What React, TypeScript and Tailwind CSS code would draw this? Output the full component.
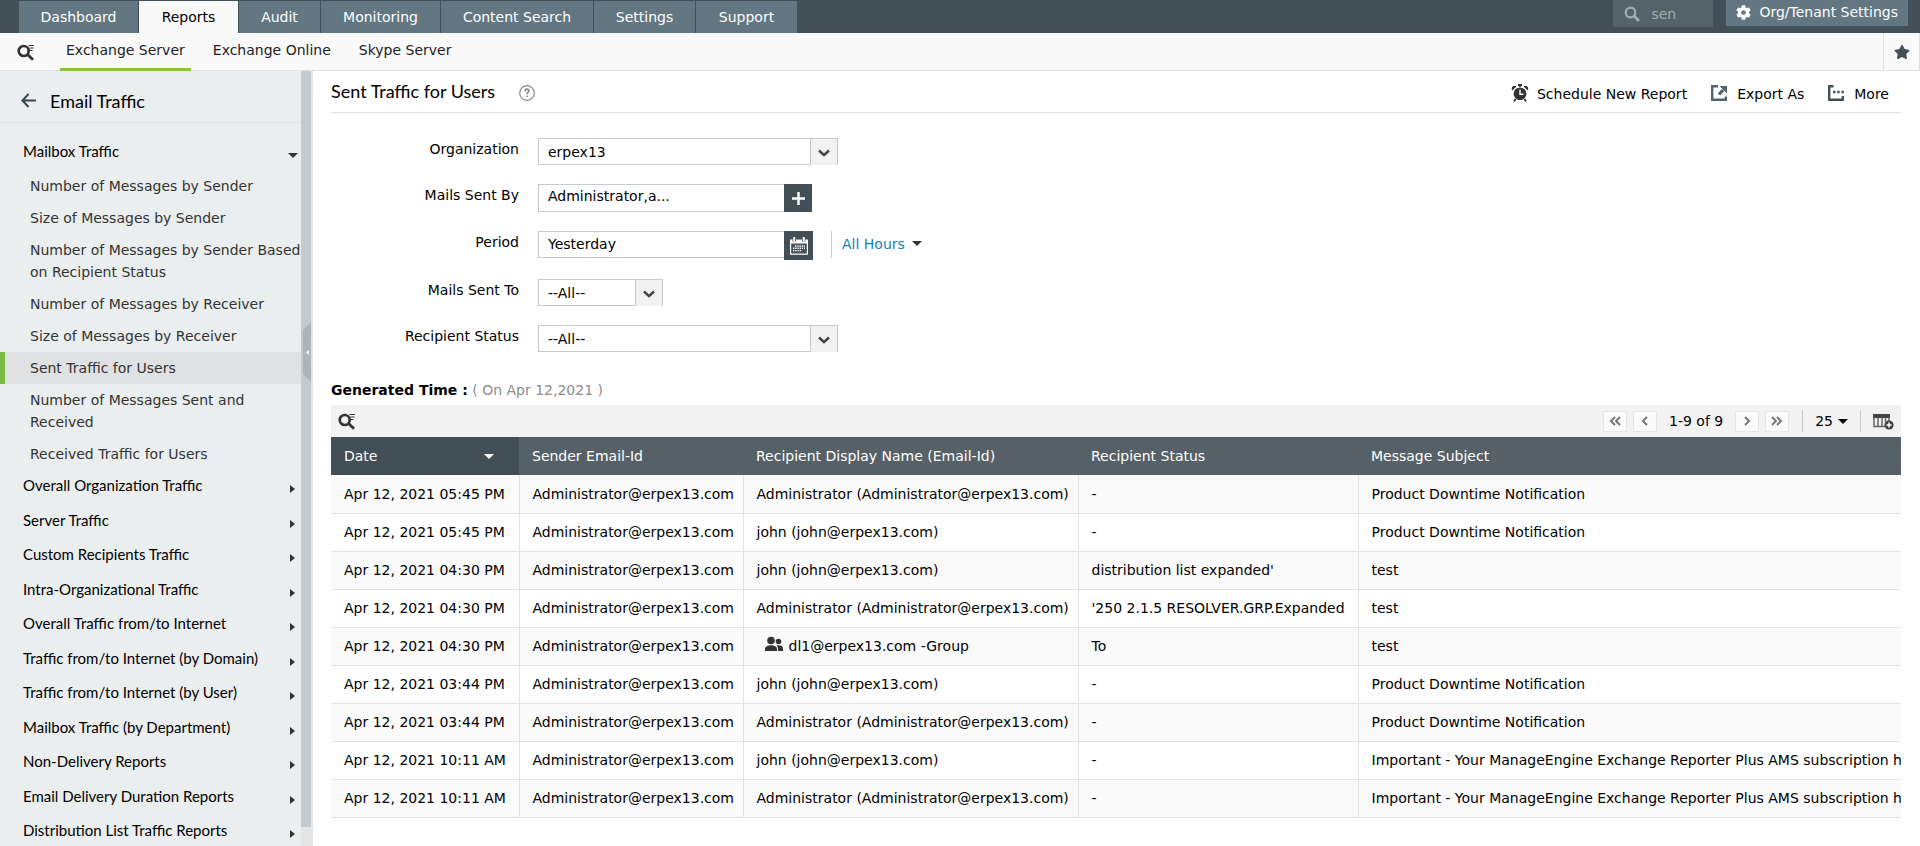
import React, { useState } from "react";
import { FaStar, FaCog } from "react-icons/fa";

interface ReportRow {
  date: string;
  recipient: string;
  group?: boolean;
  status: string;
  subject: string;
}

const SENDER = "Administrator@erpex13.com";
const ADMIN = "Administrator (Administrator@erpex13.com)";
const JOHN = "john (john@erpex13.com)";
const EXPIRY =
  "Important - Your ManageEngine Exchange Reporter Plus AMS subscription has";

const tabs = [
  { name: "Dashboard", width: "w-[119px]" },
  { name: "Reports", width: "w-[99px]" },
  { name: "Audit", width: "w-[81px]" },
  { name: "Monitoring", width: "w-[119px]" },
  { name: "Content Search", width: "w-[152px]" },
  { name: "Settings", width: "w-[101px]" },
  { name: "Support", width: "w-[101px]" },
];

const subTabs = ["Exchange Server", "Exchange Online", "Skype Server"];

const mailboxReports = [
  "Number of Messages by Sender",
  "Size of Messages by Sender",
  "Number of Messages by Sender Based on Recipient Status",
  "Number of Messages by Receiver",
  "Size of Messages by Receiver",
  "Sent Traffic for Users",
  "Number of Messages Sent and Received",
  "Received Traffic for Users",
];

const categories = [
  "Overall Organization Traffic",
  "Server Traffic",
  "Custom Recipients Traffic",
  "Intra-Organizational Traffic",
  "Overall Traffic from/to Internet",
  "Traffic from/to Internet (by Domain)",
  "Traffic from/to Internet (by User)",
  "Mailbox Traffic (by Department)",
  "Non-Delivery Reports",
  "Email Delivery Duration Reports",
  "Distribution List Traffic Reports",
];

const rows: ReportRow[] = [
  { date: "Apr 12, 2021 05:45 PM", recipient: ADMIN, status: "-", subject: "Product Downtime Notification" },
  { date: "Apr 12, 2021 05:45 PM", recipient: JOHN, status: "-", subject: "Product Downtime Notification" },
  { date: "Apr 12, 2021 04:30 PM", recipient: JOHN, status: "distribution list expanded'", subject: "test" },
  { date: "Apr 12, 2021 04:30 PM", recipient: ADMIN, status: "'250 2.1.5 RESOLVER.GRP.Expanded", subject: "test" },
  { date: "Apr 12, 2021 04:30 PM", recipient: "dl1@erpex13.com -Group", group: true, status: "To", subject: "test" },
  { date: "Apr 12, 2021 03:44 PM", recipient: JOHN, status: "-", subject: "Product Downtime Notification" },
  { date: "Apr 12, 2021 03:44 PM", recipient: ADMIN, status: "-", subject: "Product Downtime Notification" },
  { date: "Apr 12, 2021 10:11 AM", recipient: JOHN, status: "-", subject: EXPIRY },
  { date: "Apr 12, 2021 10:11 AM", recipient: ADMIN, status: "-", subject: EXPIRY },
];

const FilterIcon = () => (
  <svg className="w-[18px] h-[17px]" viewBox="0 0 18 17" fill="none" stroke="#333">
    <circle cx="6.7" cy="7" r="5" strokeWidth="2.6" />
    <path d="M10.5 10.5L16 15.8" strokeWidth="2.8" />
    <path d="M11.5 1.5h5.5M12.5 4h4M13 6.5h2.5" strokeWidth="1.1" />
  </svg>
);

const ChevronIcon = () => (
  <svg className="w-3 h-2" viewBox="0 0 12 8" fill="none" stroke="#444" strokeWidth="2.6">
    <path d="M1 1.5l5 4.6 5-4.6" />
  </svg>
);

const CaretDown = ({ color = "#333" }: { color?: string }) => (
  <svg className="w-2.5 h-[5px] shrink-0" viewBox="0 0 10 5" fill={color}>
    <path d="M0 0h10L5 5z" />
  </svg>
);

const Pager = ({ label, d }: { label: string; d: string }) => (
  <button
    aria-label={label}
    className="w-6 h-[21px] flex items-center justify-center border border-[#e6e6e6] bg-[#fafafa]"
  >
    <svg className="w-3 h-2.5" viewBox="0 0 12 10" fill="none" stroke="#777" strokeWidth="2">
      <path d={d} />
    </svg>
  </button>
);

interface SelectFieldProps {
  id: string;
  value: string;
  width: string;
}

const SelectField: React.FC<SelectFieldProps> = ({ id, value, width }) => (
  <div className={`relative h-[27px] ${width}`}>
    <select
      id={id}
      className="w-full h-full appearance-none border border-[#c4cbcf] bg-white pl-[9px] outline-none"
    >
      <option>{value}</option>
    </select>
    <span className="absolute right-px top-px bottom-0 w-[27px] flex items-center justify-center
      pointer-events-none border-l border-[#c4cbcf] bg-[#f2f2f2] pt-0.5">
      <ChevronIcon />
    </span>
  </div>
);

interface FieldProps {
  id: string;
  label: string;
  children: React.ReactNode;
}

const Field: React.FC<FieldProps> = ({ id, label, children }) => (
  <div className="flex items-start">
    <label htmlFor={id} className="w-[188px] mr-[19px] text-right leading-[22px]">
      {label}
    </label>
    {children}
  </div>
);

const App: React.FC = () => {
  const [selected, setSelected] = useState("Sent Traffic for Users");

  return (
    <div className="h-screen flex flex-col overflow-hidden bg-white text-black text-sm
      font-['DejaVu_Sans',sans-serif]">

      {/* Top bar */}
      <header className="h-[33px] shrink-0 flex items-start bg-[#434f57] pl-[19px] pr-3">
        <nav className="flex gap-px pt-px">
          {tabs.map((tab) => (
            <a
              key={tab.name}
              href="#"
              className={`h-8 flex items-center justify-center ${tab.width} ${tab.name === "Reports"
                ? "bg-[#f9f9f9] text-black"
                : "bg-[#637783] text-white"
                }`}
            >
              {tab.name}
            </a>
          ))}
        </nav>
        <label className="ml-auto w-[100px] h-[27px] flex items-center bg-[#56626a] pl-[11px]">
          <svg className="w-4 h-4 mr-[11px] shrink-0" viewBox="0 0 16 16" fill="none" stroke="#a4abaf">
            <circle cx="6.5" cy="6.5" r="4.8" strokeWidth="2.2" />
            <path d="M10 10l5 5" strokeWidth="2.6" />
          </svg>
          <input
            aria-label="Search"
            defaultValue="sen"
            className="w-full min-w-0 bg-transparent text-[#a4abaf] outline-none"
          />
        </label>
        <button className="ml-[13px] h-[26px] px-2.5 pb-0.5 flex items-center gap-2 bg-[#637783] text-white whitespace-nowrap">
          <FaCog className="w-[15px] h-[15px]" />
          Org/Tenant Settings
        </button>
      </header>

      {/* Sub navigation */}
      <nav className="h-[38px] shrink-0 flex bg-[#f9f9f9] border-b border-[#e2e2e2] text-[#222]">
        <button aria-label="Filter" className="w-[60px] pl-[17px] pt-0.5 flex items-center">
          <FilterIcon />
        </button>
        <div className="flex gap-4">
          {subTabs.map((name, i) => (
            <a
              key={name}
              href="#"
              className={`h-[38px] px-1.5 pt-1.5 leading-[22px] border-b-[3px] ${i === 0
                ? "border-[#8bc53f]"
                : "border-transparent"
                }`}
            >
              {name}
            </a>
          ))}
        </div>
        <button aria-label="Favorites" className="ml-auto w-[37px] flex items-center justify-center
          border-x border-[#e2e2e2] text-[#434f57]">
          <FaStar className="w-4 h-4" />
        </button>
      </nav>

      <div className="flex-1 min-h-0 flex">

        {/* Sidebar */}
        <aside className="w-[301px] shrink-0 overflow-hidden bg-[#eaeeef]">
          <div className="h-[52px] flex items-center gap-3.5 pl-[21px] pt-2 border-b border-[#dfe3e5]
            font-[Lato,sans-serif] text-lg">
            <svg className="w-[15px] h-[15px]" viewBox="0 0 15 15" fill="none" stroke="#37474f" strokeWidth="2">
              <path d="M15 7.5H1.5M7.5 1l-6 6.5 6 6.5" />
            </svg>
            Email Traffic
          </div>
          <button className="w-full h-[47px] flex items-center justify-between pl-[23px] pr-[3px] pt-2.5
            font-[Lato,sans-serif] text-[15px]">
            Mailbox Traffic
            <span className="pt-2"><CaretDown /></span>
          </button>
          <ul className="text-[#333]">
            {mailboxReports.map((name) => (
              <li key={name}>
                <a
                  href="#"
                  onClick={() => setSelected(name)}
                  className={`block py-[5px] pl-[25px] border-l-[5px] leading-[22px] ${selected === name
                    ? "bg-[#dfe1e2] border-[#7dbb4a]"
                    : "border-transparent"
                    }`}
                >
                  {name}
                </a>
              </li>
            ))}
          </ul>
          <ul className="font-[Lato,sans-serif] text-[15px]">
            {categories.map((name) => (
              <li key={name} className="odd:h-[34px] even:h-[35px]">
                <button className="w-full h-full flex items-center justify-between pl-[23px] pr-1.5 pb-0.5">
                  {name}
                  <svg className="w-[5px] h-2 mt-1.5" viewBox="0 0 5 8" fill="#333">
                    <path d="M0 0l5 4-5 4z" />
                  </svg>
                </button>
              </li>
            ))}
          </ul>
        </aside>

        {/* Collapse strip */}
        <div className="w-[12px] shrink-0 flex flex-col bg-[#e3e5e7] border-r border-[#e3e5e7]">
          <button aria-label="Collapse sidebar" className="w-2.5 flex-1 mb-[19px] bg-[#c4cbcf] flex justify-end pt-[251px]">
            <svg className="w-2 h-[60px]" viewBox="0 0 8 60">
              <path d="M8 0L0 8v44l8 8z" fill="#aeb5b9" />
              <path d="M6 28v5l-3-2.5z" fill="#fff" />
            </svg>
          </button>
        </div>

        <main className="flex-1 min-w-0 pl-[18px] pr-[19px]">

          {/* Report title */}
          <div className="h-[42px] flex items-center border-b border-[#dedede]">
            <h1 className="font-[Lato,sans-serif] text-lg pb-0.5">Sent Traffic for Users</h1>
            <button aria-label="Help" className="ml-6 pt-0.5">
              <svg className="w-4 h-4" viewBox="0 0 16 16" fill="none" stroke="#888">
                <circle cx="8" cy="8" r="7.3" strokeWidth="1.2" />
                <path d="M6 6.2c0-2.8 4-2.6 4-.2 0 1.5-2 1.5-2 3.2M8 10.5v1.6" strokeWidth="1.6" />
              </svg>
            </button>
            <div className="ml-auto flex items-center gap-6 pr-3 pt-1">
              <button className="flex items-center gap-2">
                <svg className="w-[18px] h-[18px] mb-0.5" viewBox="0 0 18 18">
                  <path d="M4.5 15L3 17.5M13.5 15l1.5 2.5M9 3V1M7 1h4" stroke="#333" strokeWidth="1.8" />
                  <path d="M1.200 6.500C-.5 3 3 .5 5.500 2.500zM16.800 6.500C18.500 3 15 .5 12.500 2.500z" fill="#333" />
                  <circle cx="9" cy="9.800" r="6.400" fill="#333" />
                  <path d="M9 5.500v4.800h3.500" stroke="#fff" strokeWidth="1.400" fill="none" />
                </svg>
                Schedule New Report
              </button>
              <button className="flex items-center gap-2.5">
                <svg className="w-4 h-4 mb-0.5" viewBox="0 0 16 16" fill="none" stroke="#55626a">
                  <path d="M7 1.200H1.200v13.600h13.600V11.500" strokeWidth="2.400" />
                  <path d="M8 9.500l4-4.500" strokeWidth="3.200" />
                  <path d="M8.500 1H16v7.500z" fill="#55626a" stroke="none" />
                </svg>
                Export As
              </button>
              <button className="flex items-center gap-2.5">
                <svg className="w-4 h-4 mb-0.5" viewBox="0 0 16 16" fill="none" stroke="#434f57">
                  <path d="M5.500 1.200H1.200v13.600h13.600V11" strokeWidth="2.400" />
                  <path d="M5 7h11" strokeWidth="2.400" strokeDasharray="2.400 1.800" />
                </svg>
                More
              </button>
            </div>
          </div>

          {/* Filters */}
          <form className="pt-[25px] flex flex-col gap-[19px]">
            <Field id="organization" label="Organization">
              <SelectField id="organization" value="erpex13" width="w-[300px]" />
            </Field>
            <Field id="sent-by" label="Mails Sent By">
              <input
                id="sent-by"
                defaultValue="Administrator,a..."
                className="w-[246px] h-7 border border-r-0 border-[#c4cbcf] pl-[9px] pb-1 outline-none"
              />
              <button type="button" aria-label="Add senders" className="size-7 flex items-center justify-center bg-[#434f57]">
                <svg className="w-[13px] h-[13px]" viewBox="0 0 13 13" stroke="#fff" strokeWidth="2.4">
                  <path d="M6.5 0v13M0 6.5h13" />
                </svg>
              </button>
            </Field>
            <Field id="period" label="Period">
              <input
                id="period"
                defaultValue="Yesterday"
                className="w-[246px] h-[27px] border border-r-0 border-[#c4cbcf] pl-[9px] pb-0.5 outline-none"
              />
              <button type="button" aria-label="Pick a period" className="size-[29px] flex items-center justify-center bg-[#434f57]">
                <svg className="w-[18px] h-[18px]" viewBox="0 0 18 18" fill="none" stroke="#fff">
                  <path d="M.6 4v13.2h16.8V4" strokeWidth="1.2" />
                  <path d="M0 3.500h2.500M6 3.500h6M15.500 3.500H18M0 5.500h18" strokeWidth="1.800" />
                  <path d="M4.200 0v4.500M13.800 0v4.500" strokeWidth="2" />
                  <path d="M5 9h10M3 11.300h12M3 13.600h9" strokeWidth="1.400" strokeDasharray="1.400 .8" />
                </svg>
              </button>
              <button type="button" className="ml-[18px] h-[27px] border-l border-[#c4cbcf] pl-2.5 pb-0.5
                flex items-center gap-[7px] text-[#1482b4]">
                All Hours
                <CaretDown />
              </button>
            </Field>
            <Field id="sent-to" label="Mails Sent To">
              <SelectField id="sent-to" value="--All--" width="w-[125px]" />
            </Field>
            <Field id="status" label="Recipient Status">
              <SelectField id="status" value="--All--" width="w-[300px]" />
            </Field>
          </form>

          <p className="pt-[25px] pb-0.5 leading-[26px] text-[#8c8c8c]">
            <b className="text-black">Generated Time :</b> ( On Apr 12,2021 )
          </p>

          {/* Table toolbar */}
          <div className="h-8 flex items-center bg-[#f2f2f2] px-[7px]">
            <button aria-label="Filter rows"><FilterIcon /></button>
            <div className="ml-auto flex items-center">
              <div className="flex gap-1.5">
                <Pager label="First page" d="M6 1L2 5l4 4M11 1L7 5l4 4" />
                <Pager label="Previous page" d="M8 1L4 5l4 4" />
              </div>
              <span className="px-3">1-9 of 9</span>
              <div className="flex gap-1.5">
                <Pager label="Next page" d="M4 1l4 4-4 4" />
                <Pager label="Last page" d="M1 1l4 4-4 4M6 1l4 4-4 4" />
              </div>
              <button className="ml-[13px] h-[22px] px-3 flex items-center gap-[5px] border-x border-[#c4cbcf]">
                25
                <CaretDown color="#000" />
              </button>
              <button aria-label="Add or remove columns" className="ml-3">
                <svg className="w-[21px] h-[17px]" viewBox="0 0 21 17">
                  <path d="M0 1h17v4H0z" fill="#444" />
                  <path d="M1 5v8.5h11M5 5v8.5M9 5v8.5M12.5 5v4M16 5v3" stroke="#666" strokeWidth="1.5" fill="none" />
                  <circle cx="16" cy="12" r="4.6" fill="#444" />
                  <path d="M16 9.5v5M13.5 12h5" stroke="#fff" strokeWidth="1.5" />
                </svg>
              </button>
            </div>
          </div>

          {/* Report data */}
          <table className="w-full table-fixed border-collapse text-left whitespace-nowrap">
            <thead className="bg-[#566167] text-white">
              <tr className="h-[38px]">
                <th className="w-[188px] px-[13px] font-normal bg-[#434f57]">
                  <button className="w-full flex items-center justify-between pr-3">
                    Date
                    <CaretDown color="#fff" />
                  </button>
                </th>
                <th className="w-[224px] pl-[13px] font-normal">Sender Email-Id</th>
                <th className="w-[335px] pl-[13px] font-normal">Recipient Display Name (Email-Id)</th>
                <th className="w-[280px] pl-[13px] font-normal">Recipient Status</th>
                <th className="pl-[13px] font-normal">Message Subject</th>
              </tr>
            </thead>
            <tbody>
              {rows.map((row, i) => (
                <tr key={i} className="h-[38px] border-b border-[#e2e2e2] odd:bg-[#fafafa]">
                  <td className="pl-[13px] border-r border-[#e2e2e2]">{row.date}</td>
                  <td className="pl-[13px] border-r border-[#e2e2e2]">{SENDER}</td>
                  <td className="pl-[13px] border-r border-[#e2e2e2]">
                    {row.group ? (
                      <span className="flex items-center gap-1.5 pl-2">
                        <svg className="w-[18px] h-4 mb-1" viewBox="0 0 18 16" fill="#333">
                          <circle cx="6" cy="4.5" r="3.8" />
                          <path d="M0 15v-2C0 8 12 8 12 13v2z" />
                          <circle cx="13.5" cy="5.5" r="2.8" />
                          <path d="M13 15v-2.500c0-1.500-.8-2.200-1.500-2.800C14 8.700 18 9.500 18 12.500V15z" />
                        </svg>
                        {row.recipient}
                      </span>
                    ) : (
                      row.recipient
                    )}
                  </td>
                  <td className="pl-[13px] border-r border-[#e2e2e2]">{row.status}</td>
                  <td className="pl-[13px] overflow-hidden">{row.subject}</td>
                </tr>
              ))}
            </tbody>
          </table>
        </main>
      </div>
    </div>
  );
};

export default App;
